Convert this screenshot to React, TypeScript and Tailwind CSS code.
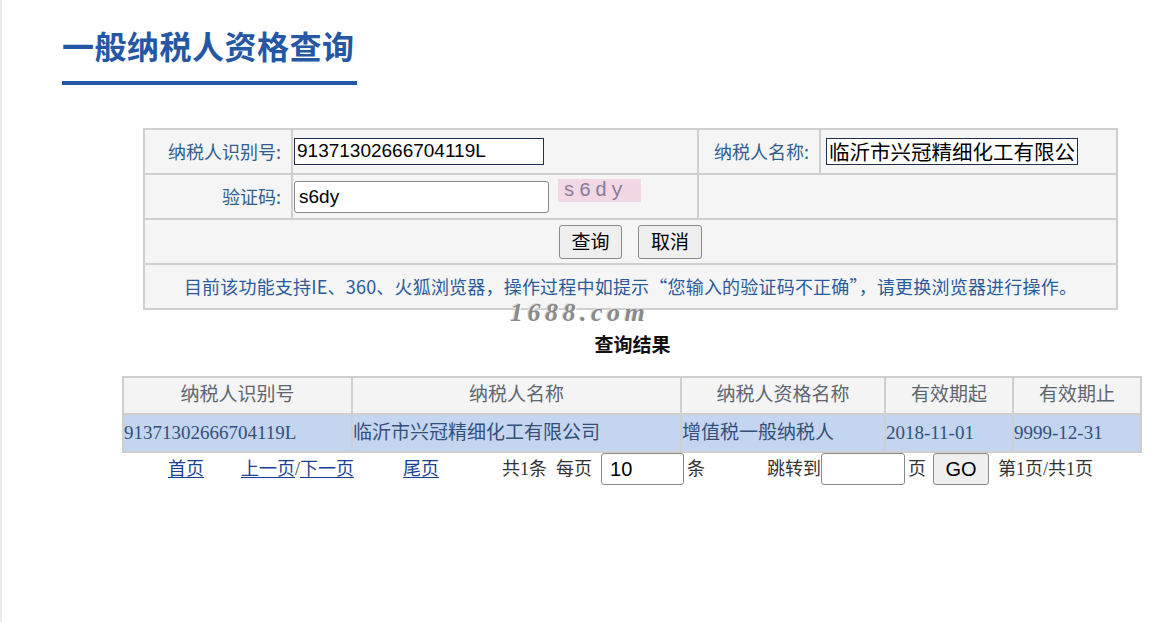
import React from "react";

const sans = "font-['Noto_Sans_CJK_SC','Liberation_Sans',sans-serif]";
const serif = "font-['Liberation_Serif','Noto_Sans_CJK_SC',serif]";

function ResultTable() {
  const heads = ["纳税人识别号", "纳税人名称", "纳税人资格名称", "有效期起", "有效期止"];
  const row = ["91371302666704119L", "临沂市兴冠精细化工有限公司", "增值税一般纳税人", "2018-11-01", "9999-12-31"];
  const widths = ["w-[229px]", "w-[329px]", "w-[204px]", "w-[128px]", "w-[128px]"];
  return (
    <table className={`ml-[120px] w-[1018px] table-fixed border-collapse border-2 border-[#cfcfcf] text-[19px] ${serif}`}>
      <colgroup>
        {widths.map((w, i) => (
          <col key={i} className={w} />
        ))}
      </colgroup>
      <thead>
        <tr className="h-[37px] bg-[#f4f4f4]">
          {heads.map((h) => (
            <th key={h} className="border-2 border-[#cfcfcf] font-normal text-[#5d6770] text-center">
              {h}
            </th>
          ))}
        </tr>
      </thead>
      <tbody>
        <tr className="h-[38px] bg-[#c4d5ef]">
          {row.map((c) => (
            <td key={c} className="border-2 border-[#cfcfcf] text-left text-[#34507a] whitespace-nowrap overflow-hidden">
              {c}
            </td>
          ))}
        </tr>
      </tbody>
    </table>
  );
}

function Pager() {
  const link = "text-[#1b3f95] underline underline-offset-2";
  return (
    <div className={`flex items-center h-[34px] -mt-[1px] text-[18px] text-[#333] ${serif}`}>
      <a className={`ml-[166px] ${link}`}>首页</a>
      <span className="ml-[37px]">
        <a className={link}>上一页</a>/<a className={link}>下一页</a>
      </span>
      <a className={`ml-[49px] ${link}`}>尾页</a>
      <span className="ml-[63px]">共1条&nbsp;&nbsp;每页</span>
      <input
        defaultValue="10"
        className="ml-[9px] w-[83px] h-[32px] px-[8px] bg-white border border-[#8a8a8a] rounded-[3px] text-[20px] text-black font-['Liberation_Sans',sans-serif]"
      />
      <span className="ml-[3px]">条</span>
      <span className="ml-[62px]">跳转到</span>
      <input className="w-[84px] h-[32px] bg-white border border-[#8a8a8a] rounded-[3px]" />
      <span className="ml-[3px]">页</span>
      <button className="ml-[7px] w-[56px] h-[32px] bg-[#efefef] border border-[#8a8a8a] rounded-[3px] text-[20px] text-black font-['Liberation_Sans',sans-serif]">
        GO
      </button>
      <span className="ml-[9px]">第1页/共1页</span>
    </div>
  );
}

export default function App() {
  const cell = "border-2 border-[#cfcfcf]";
  const label = `${cell} text-right pr-[10px] text-[18px] text-[#2f5e8f]`;
  return (
    <div className={`relative min-h-[622px] bg-white border-l-2 border-[#ececec] ${sans}`}>
      <div className="pt-[21px] pl-[60px]">
        <h1 className="text-[32px] leading-[48px] font-bold text-[#2557a4] tracking-[0.5px]">一般纳税人资格查询</h1>
        <div className="mt-[12px] h-[4px] w-[295px] bg-[#2557a4]" />
      </div>

      <table className="mt-[43px] ml-[141px] w-[973px] table-fixed border-collapse border-2 border-[#cfcfcf] bg-[#f5f5f5]">
        <colgroup>
          <col className="w-[148px]" />
          <col className="w-[406px]" />
          <col className="w-[122px]" />
          <col className="w-[297px]" />
        </colgroup>
        <tbody>
          <tr className="h-[45px]">
            <td className={label}>纳税人识别号:</td>
            <td className={`${cell} pl-[1px]`}>
              <input
                defaultValue="91371302666704119L"
                className="block w-[250px] h-[27px] px-[2px] bg-white border border-[#1f2f4d] text-[19px] text-black font-['Liberation_Sans',sans-serif]"
              />
            </td>
            <td className={label}>纳税人名称:</td>
            <td className={`${cell} pl-[5px]`}>
              <input
                defaultValue="临沂市兴冠精细化工有限公司"
                className="block w-[252px] h-[27px] px-[2px] bg-white border border-[#1f2f4d] text-[20.5px] text-black"
              />
            </td>
          </tr>
          <tr className="h-[45px]">
            <td className={label}>验证码:</td>
            <td className={`${cell} pl-[1px]`}>
              <div className="flex items-center">
                <input
                  defaultValue="s6dy"
                  className="block w-[255px] h-[32px] px-[4px] bg-white border border-[#8a8a8a] rounded-[3px] text-[19px] text-black font-['Liberation_Sans',sans-serif]"
                />
                <div className="ml-[9px] -mt-[12px] w-[83px] h-[23px] bg-[#f2d7e5] text-[20px] leading-[23px] pl-[5px] tracking-[4px] text-[#8a7b98] font-['Liberation_Mono',monospace]">
                  s6dy
                </div>
              </div>
            </td>
            <td className={cell} colSpan={2}></td>
          </tr>
          <tr className="h-[45px]">
            <td className={cell} colSpan={4}>
              <div className="flex justify-center gap-[16px]">
                <button className="w-[63px] h-[34px] bg-[#efefef] border border-[#8a8a8a] rounded-[3px] text-[19px] text-black">查询</button>
                <button className="w-[64px] h-[34px] bg-[#efefef] border border-[#8a8a8a] rounded-[3px] text-[19px] text-black">取消</button>
              </div>
            </td>
          </tr>
          <tr className="h-[45px]">
            <td className={`${cell} text-center text-[18px] tracking-[0.2px] text-[#2a5b9c]`} colSpan={4}>
              目前该功能支持IE、360、火狐浏览器，操作过程中如提示“您输入的验证码不正确”，请更换浏览器进行操作。
            </td>
          </tr>
        </tbody>
      </table>

      <div className="absolute left-[508px] top-[293px] text-[26px] font-bold italic tracking-[4.5px] text-[#8a8a8a] font-['Liberation_Serif',serif] [text-shadow:1px_1px_0_#ffffff,-1px_-1px_0_#dddddd]">
        1688.com
      </div>

      <div className={`mt-[22px] pl-[108px] text-center text-[19px] leading-[28px] font-bold text-[#111] ${serif}`}>查询结果</div>

      <div className="mt-[16px]">
        <ResultTable />
      </div>
      <Pager />
    </div>
  );
}
